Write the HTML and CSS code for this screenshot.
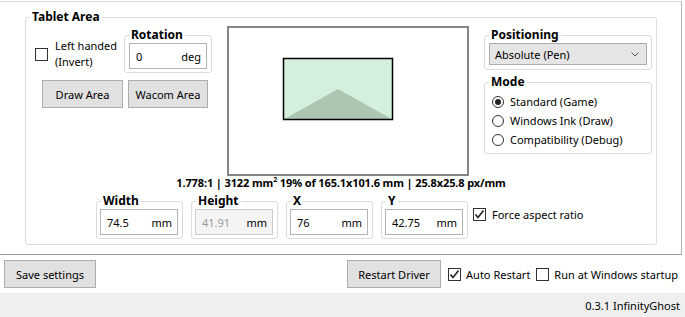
FILE: index.html
```html
<!DOCTYPE html>
<html lang="en">
<head>
    <meta charset="UTF-8">
    <title>Tablet Driver</title>
    <link rel="stylesheet" href="styles.css">
</head>
<body>
    <div class="app">
        <div class="tab-page">
            <fieldset class="group main-group">
                <legend>Tablet Area</legend>

                <div class="top-row">
                    <!-- left side: handedness, rotation, area buttons -->
                    <div class="left-col">
                        <div class="left-top">
                            <label class="check left-handed">
                                <span class="box"></span>
                                <span>Left handed<br>(Invert)</span>
                            </label>
                            <fieldset class="group rotation">
                                <legend>Rotation</legend>
                                <div class="field"><span>0</span><span>deg</span></div>
                            </fieldset>
                        </div>
                        <div class="area-buttons">
                            <button class="btn draw-btn">Draw Area</button>
                            <button class="btn wacom-btn">Wacom Area</button>
                        </div>
                    </div>

                    <!-- screen preview -->
                    <div class="screen">
                        <svg width="242" height="150" viewBox="0 0 242 150">
                            <rect x="1" y="1" width="240" height="148" fill="#fff" stroke="#858585" stroke-width="2"/>
                            <rect x="56.5" y="32.5" width="109" height="61" fill="#d4efdb"/>
                            <polygon points="56.5,93.5 111,63 165.5,93.5" fill="#adc6b1"/>
                            <rect x="56.5" y="32.5" width="109" height="61" fill="none" stroke="#000" stroke-width="1.5"/>
                        </svg>
                    </div>

                    <!-- right side: positioning and mode -->
                    <div class="right-col">
                        <fieldset class="group positioning">
                            <legend>Positioning</legend>
                            <div class="combo">
                                <span>Absolute (Pen)</span>
                                <svg width="8" height="5" viewBox="0 0 8 5"><path d="M0.5 0.5 L4 4 L7.5 0.5" fill="none" stroke="#555" stroke-width="1"/></svg>
                            </div>
                        </fieldset>
                        <fieldset class="group mode">
                            <legend>Mode</legend>
                            <label class="radio checked"><span class="dot"></span>Standard (Game)</label>
                            <label class="radio"><span class="dot"></span>Windows Ink (Draw)</label>
                            <label class="radio"><span class="dot"></span>Compatibility (Debug)</label>
                        </fieldset>
                    </div>
                </div>

                <div class="info">1.778:1 | 3122 mm<sup>2</sup> 19% of 165.1x101.6 mm | 25.8x25.8 px/mm</div>

                <div class="size-row">
                    <fieldset class="group size">
                        <legend>Width</legend>
                        <div class="field"><span>74.5</span><span>mm</span></div>
                    </fieldset>
                    <fieldset class="group size">
                        <legend>Height</legend>
                        <div class="field disabled"><span>41.91</span><span>mm</span></div>
                    </fieldset>
                    <fieldset class="group size">
                        <legend>X</legend>
                        <div class="field"><span>76</span><span>mm</span></div>
                    </fieldset>
                    <fieldset class="group size">
                        <legend>Y</legend>
                        <div class="field"><span>42.75</span><span>mm</span></div>
                    </fieldset>
                    <label class="check checked force-aspect">
                        <span class="box"><svg width="11" height="11" viewBox="0 0 11 11"><path d="M1.5 5.5 L4 8.5 L9.5 1.5" fill="none" stroke="#222" stroke-width="1.6"/></svg></span>
                        <span>Force aspect ratio</span>
                    </label>
                </div>
            </fieldset>
        </div>

        <div class="actions">
            <button class="btn save-btn">Save settings</button>
            <div class="actions-right">
                <button class="btn restart-btn">Restart Driver</button>
                <label class="check checked">
                    <span class="box"><svg width="11" height="11" viewBox="0 0 11 11"><path d="M1.5 5.5 L4 8.5 L9.5 1.5" fill="none" stroke="#222" stroke-width="1.6"/></svg></span>
                    <span>Auto Restart</span>
                </label>
                <label class="check">
                    <span class="box"></span>
                    <span>Run at Windows startup</span>
                </label>
            </div>
        </div>

        <div class="status">0.3.1 InfinityGhost</div>
    </div>
</body>
</html>
```

FILE: styles.css
```css
body {
    margin: 0;
    width: 685px;
    height: 317px;
    overflow: hidden;
    background: #fff;
    color: #000;
    font-family: "Segoe UI", "Noto Sans", sans-serif;
    font-size: 11px;
}

.app {
    display: flex;
    flex-direction: column;
    height: 317px;
}

.tab-page {
    box-sizing: border-box;
    width: 682px;
    height: 254px;
    margin-top: 1px;
    border-top: 1px solid #dadada;
    border-right: 1px solid #b4b4b4;
    border-bottom: 1px solid #a0a0a0;
}

/* group boxes */
.group {
    margin: 0;
    padding: 0;
    border: 1px solid #dcdcdc;
    border-radius: 3px;
    min-width: 0;
    box-sizing: border-box;
}

.group legend {
    margin-left: 4px;
    padding: 0 2px;
    font-size: 12px;
    font-weight: 700;
    line-height: 16px;
}

.main-group {
    width: 632px;
    margin: 7px 0 0 25px;
    padding: 1px 0 5px 0;
}

.top-row {
    display: flex;
    align-items: flex-start;
}

.left-col {
    width: 177px;
    margin-left: 9px;
}

.left-top {
    display: flex;
    align-items: flex-start;
}

.check {
    display: flex;
    align-items: center;
    gap: 6px;
}

.check .box {
    width: 13px;
    height: 13px;
    box-sizing: border-box;
    border: 1px solid #333;
    background: #fff;
    display: flex;
    align-items: center;
    justify-content: center;
    flex-shrink: 0;
}

.left-handed {
    width: 89px;
    margin-top: 12px;
    line-height: 16px;
    gap: 7px;
}

.rotation {
    width: 88px;
    margin-top: 1px;
    padding: 0 4px 3px 4px;
}

.rotation legend,
.positioning legend {
    margin-left: 0;
}

.field {
    height: 26px;
    box-sizing: border-box;
    border: 1px solid #b2b2b2;
    background: #fff;
    display: flex;
    align-items: center;
    justify-content: space-between;
    padding: 0 5px 0 6px;
}

.field.disabled {
    background: #f4f4f4;
    border-color: #cdcdcd;
}

.field.disabled span:first-child {
    color: #9a9a9a;
}

.area-buttons {
    display: flex;
    gap: 5px;
    margin: 7px 0 0 7px;
}

.btn {
    height: 28px;
    box-sizing: border-box;
    border: 1px solid #adadad;
    background: #e1e1e1;
    font-family: inherit;
    font-size: 11px;
    color: #000;
    padding: 0;
}

.draw-btn {
    width: 81px;
}

.wacom-btn {
    width: 80px;
}

.screen {
    margin-left: 15px;
    height: 150px;
}

.screen svg {
    display: block;
}

.right-col {
    width: 168px;
    margin-left: 15px;
}

.positioning {
    margin-top: 1px;
    padding: 0 4px 4px 4px;
}

.combo {
    height: 22px;
    box-sizing: border-box;
    border: 1px solid #acacac;
    background: #e5e5e5;
    display: flex;
    align-items: center;
    justify-content: space-between;
    padding: 0 7px 0 5px;
}

.mode {
    margin-top: 4px;
    padding: 2px 0 4px 7px;
}

.mode legend {
    margin-left: -3px;
}

.radio {
    display: flex;
    align-items: center;
    gap: 6px;
    line-height: 19px;
}

.radio .dot {
    width: 12px;
    height: 12px;
    box-sizing: border-box;
    border: 1px solid #333;
    border-radius: 50%;
    background: #fff;
    display: flex;
    align-items: center;
    justify-content: center;
}

.radio.checked .dot::after {
    content: "";
    width: 6px;
    height: 6px;
    border-radius: 50%;
    background: #222;
}

.info {
    text-align: center;
    font-weight: 700;
    line-height: 14px;
    letter-spacing: -0.12px;
}

.info sup {
    font-size: 7px;
    line-height: 0;
}

.size-row {
    display: flex;
    align-items: flex-start;
    margin: 3px 0 0 70px;
}

.size {
    width: 87px;
    margin-right: 8px;
    padding: 0 4px 3px 3px;
}

.size legend {
    margin-left: 1px;
}

.force-aspect {
    margin: 14px 0 0 -3px;
}

/* bottom bar */
.actions {
    height: 38px;
    box-sizing: border-box;
    padding: 5px 7px 0 4px;
    display: flex;
    justify-content: space-between;
    align-items: flex-start;
}

.save-btn {
    width: 92px;
}

.actions-right {
    display: flex;
    align-items: center;
    gap: 6px;
}

.restart-btn {
    width: 94px;
    margin-right: 1px;
}

.actions-right .check {
    gap: 5px;
}

.status {
    flex: 1;
    background: #efefef;
    text-align: right;
    padding: 5px 5px 0 0;
}
```
